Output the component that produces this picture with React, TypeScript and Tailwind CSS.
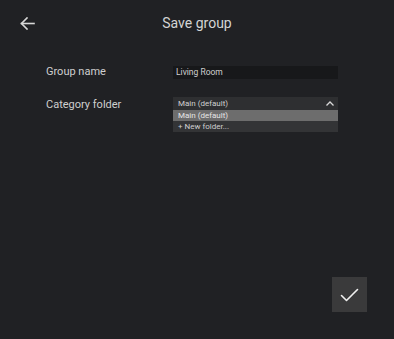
import React from "react";

export default function App() {
  return (
    <div
      className="w-[394px] h-[339px] bg-[#202124] flex flex-col text-[#d0d0d0] overflow-hidden"
      style={{ fontFamily: "Roboto, 'Noto Sans', sans-serif" }}
    >
      <div className="h-[46px] flex items-center relative shrink-0">
        <div className="pl-[20px] flex items-center">
          <svg width="15" height="13" viewBox="0 0 15 13" fill="none" stroke="#d8d8d8" strokeWidth="1.6" strokeLinecap="square">
            <path d="M1.5 6.5H14" />
            <path d="M7 1L1.5 6.5L7 12" />
          </svg>
        </div>
        <div className="absolute inset-0 flex items-center justify-center text-[14px] text-[#d4d4d4] pointer-events-none">
          Save group
        </div>
      </div>

      <div className="pl-[46px] flex flex-col">
        <div className="flex items-center h-[14px] mt-[19px]">
          <div className="w-[127px] text-[11px] text-[#cfcfcf]">Group name</div>
          <div className="w-[165px] h-[13px] bg-[#17181a] text-[8.5px] text-[#cfcfcf] flex items-center pl-[3px]">
            Living Room
          </div>
        </div>
        <div className="flex items-start mt-[18px]">
          <div className="w-[127px] text-[11px] text-[#cfcfcf] leading-[14px] mt-[1px]">Category folder</div>
          <div className="w-[165px] flex flex-col">
            <div className="h-[13px] bg-[#2e2f31] flex items-center justify-between pl-[5px] pr-[4px] text-[8px] text-[#d0d0d0]">
              <span>Main (default)</span>
              <svg width="8" height="5" viewBox="0 0 8 5" fill="none" stroke="#d8d8d8" strokeWidth="1.3">
                <path d="M0.5 4.5L4 1L7.5 4.5" />
              </svg>
            </div>
            <div className="bg-[#333436] flex flex-col">
              <div className="h-[11px] bg-[#6d6d6d] flex items-center pl-[5px] text-[8px] text-[#e6e6e6]">Main (default)</div>
              <div className="h-[11px] flex items-center pl-[5px] text-[8px] text-[#cfcfcf]">+ New folder...</div>
            </div>
          </div>
        </div>
      </div>

      <div className="flex-1" />
      <div className="flex justify-end pr-[27px] pb-[27px]">
        <div className="w-[35px] h-[35px] bg-[#3a3a3b] flex items-center justify-center">
          <svg width="19" height="14" viewBox="0 0 19 14" fill="none" stroke="#f0f0f0" strokeWidth="1.6" strokeLinecap="round" strokeLinejoin="round">
            <path d="M1.5 7.5L6.5 12.5L17.5 1.5" />
          </svg>
        </div>
      </div>
    </div>
  );
}
